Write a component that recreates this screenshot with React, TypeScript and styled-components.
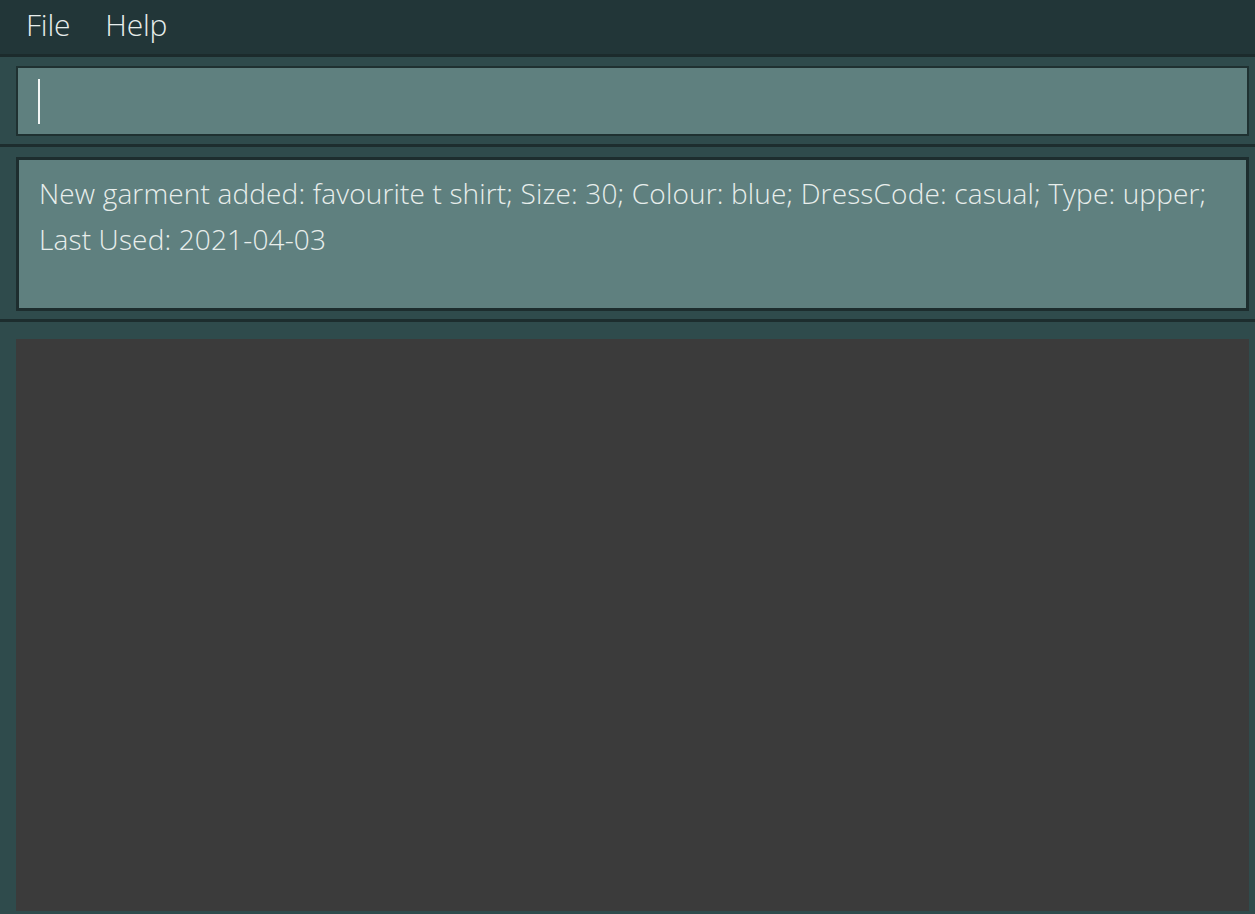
import styled, { createGlobalStyle } from "styled-components";

//STYLES
const GlobalStyle = createGlobalStyle`
  html, body {
    margin: 0;
    padding: 0;
    height: 100%;
    background: #2f4b4c;
  }
  #root {
    height: 100%;
  }
`;

//REACT
const App = () => {
  return (
    <>
      <GlobalStyle />
      <Window>
        <MenuBar>
          <MenuItem>File</MenuItem>
          <MenuItem>Help</MenuItem>
        </MenuBar>

        <Section $padTop={9} $padBottom={8}>
          <CommandBox>
            <Caret />
          </CommandBox>
        </Section>

        <Section $padTop={10} $padBottom={8}>
          <ResultBox>
            New garment added: favourite t shirt; Size: 30; Colour: blue;
            DressCode: casual; Type: upper; Last Used: 2021-04-03
          </ResultBox>
        </Section>

        <ListSection>
          <ListPanel />
        </ListSection>
      </Window>
    </>
  );
};

//STYLED-COMPONENTS
const Window = styled.div`
  display: flex;
  flex-direction: column;
  height: 914px;
  background: #2f4b4c;
  font-family: "Open Sans", "Noto Sans", sans-serif;
  font-weight: 300;
  color: #e8eeec;
`;

const MenuBar = styled.div`
  display: flex;
  align-items: center;
  gap: 35px;
  height: 57px;
  padding: 0 0 5px 26px;
  box-sizing: border-box;
  background: #223638;
  border-bottom: 3px solid #1c2b2c;
`;

const MenuItem = styled.span`
  font-size: 30px;
  letter-spacing: -0.2px;
`;

const Section = styled.div<{ $padTop: number; $padBottom: number }>`
  padding: ${(p) => p.$padTop}px 6px ${(p) => p.$padBottom}px 16px;
  border-bottom: 3px solid #1d2d2e;
`;

const CommandBox = styled.div`
  display: flex;
  align-items: center;
  height: 70px;
  box-sizing: border-box;
  padding-left: 20px;
  background: #5f807f;
  border: 2px solid #1f3131;
`;

const Caret = styled.div`
  width: 2px;
  height: 45px;
  background: #f2f6f5;
`;

const ResultBox = styled.div`
  height: 154px;
  box-sizing: border-box;
  padding: 10px 20px;
  background: #5f807f;
  border: 3px solid #1d2d2e;
  font-size: 28px;
  line-height: 46px;
  letter-spacing: 0.15px;
`;

const ListSection = styled.div`
  flex: 1;
  display: flex;
  padding: 17px 6px 3px 16px;
  min-height: 0;
`;

const ListPanel = styled.div`
  flex: 1;
  background: #3b3b3b;
`;

export default App;
